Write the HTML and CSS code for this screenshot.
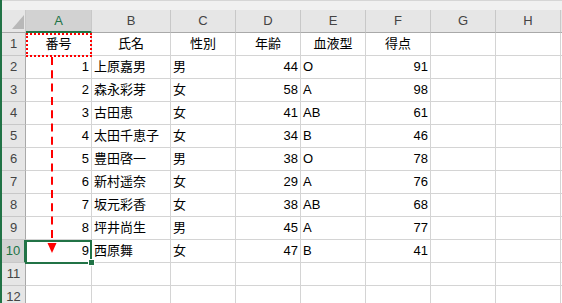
FILE: index.html
```html
<!DOCTYPE html>
<html lang="ja">
<head>
	<meta charset="utf-8">
	<title>Sheet1 - Excel</title>
	<link rel="stylesheet" href="styles.css">
</head>
<body>
	<div class="topbar"></div>
	<div class="sheet">
		<!-- column headers -->
		<div class="corner"></div>
		<div class="ch sel">A</div><div class="ch">B</div><div class="ch">C</div><div class="ch">D</div>
		<div class="ch">E</div><div class="ch">F</div><div class="ch">G</div><div class="ch">H</div><div class="ch"></div>

		<div class="rh">1</div>
		<div class="c copy">番号</div><div class="c">氏名</div><div class="c">性別</div><div class="c">年齢</div>
		<div class="c">血液型</div><div class="c">得点</div><div></div><div></div><div></div>

		<div class="rh">2</div>
		<div class="n">1</div><div>上原嘉男</div><div>男</div><div class="n">44</div><div>O</div><div class="n">91</div><div></div><div></div><div></div>
		<div class="rh">3</div>
		<div class="n">2</div><div>森永彩芽</div><div>女</div><div class="n">58</div><div>A</div><div class="n">98</div><div></div><div></div><div></div>
		<div class="rh">4</div>
		<div class="n">3</div><div>古田恵</div><div>女</div><div class="n">41</div><div>AB</div><div class="n">61</div><div></div><div></div><div></div>
		<div class="rh">5</div>
		<div class="n">4</div><div>太田千恵子</div><div>女</div><div class="n">34</div><div>B</div><div class="n">46</div><div></div><div></div><div></div>
		<div class="rh">6</div>
		<div class="n">5</div><div>豊田啓一</div><div>男</div><div class="n">38</div><div>O</div><div class="n">78</div><div></div><div></div><div></div>
		<div class="rh">7</div>
		<div class="n">6</div><div>新村遥奈</div><div>女</div><div class="n">29</div><div>A</div><div class="n">76</div><div></div><div></div><div></div>
		<div class="rh">8</div>
		<div class="n">7</div><div>坂元彩香</div><div>女</div><div class="n">38</div><div>AB</div><div class="n">68</div><div></div><div></div><div></div>
		<div class="rh">9</div>
		<div class="n">8</div><div>坪井尚生</div><div>男</div><div class="n">45</div><div>A</div><div class="n">77</div><div></div><div></div><div></div>
		<div class="rh sel">10</div>
		<div class="n cur">9</div><div>西原舞</div><div>女</div><div class="n">47</div><div>B</div><div class="n">41</div><div></div><div></div><div></div>
		<div class="rh">11</div>
		<div></div><div></div><div></div><div></div><div></div><div></div><div></div><div></div><div></div>
		<div class="rh">12</div>
		<div></div><div></div><div></div><div></div><div></div><div></div><div></div><div></div><div></div>

		<!-- fill arrow, drawn over the cells -->
		<svg class="arrow" width="100" height="260" viewBox="0 0 100 260">
			<line x1="50" y1="47" x2="50" y2="234" stroke="#ff0000" stroke-width="2" stroke-dasharray="8 5.3"/>
			<polygon points="45.5,233 54.5,233 50,243" fill="#ff0000"/>
		</svg>
	</div>
</body>
</html>
```

FILE: styles.css
```css
html, body {
	margin: 0;
	overflow: hidden;
}
body {
	background: #fff;
	color: #000;
	font-family: "Liberation Sans", "Noto Sans CJK JP", sans-serif;
	font-size: 13px;
	border-left: 2px solid #217346;
	height: 303px;
	box-sizing: border-box;
}
.topbar {
	height: 10px;
	background: #f1f1f1;
	border-top: 1px solid #d6d6d6;
	box-sizing: border-box;
}
.sheet {
	position: relative;
	display: grid;
	grid-template-columns: 24px 66px 79px repeat(7, 65px);
	grid-auto-rows: 23px;
}
.sheet > div {
	box-sizing: border-box;
	border-right: 1px solid #d4d4d4;
	border-bottom: 1px solid #d4d4d4;
	line-height: 22px;
	padding: 0 2px;
	white-space: nowrap;
}
.n { text-align: right; }
.c { text-align: center; }

/* headers */
.sheet > .ch, .sheet > .corner {
	background: #e6e6e6;
	border-right-color: #c8c8c8;
	border-bottom-color: #a9a9a9;
	text-align: center;
	color: #444;
}
.sheet > .rh {
	background: #e6e6e6;
	border-right-color: #a9a9a9;
	border-bottom-color: #c8c8c8;
	text-align: center;
	color: #444;
	padding: 0;
}
.sheet > .ch.sel {
	background: #d2d2d2;
	color: #217346;
	border-bottom: 2px solid #217346;
}
.sheet > .rh.sel {
	background: #d2d2d2;
	color: #217346;
	border-right: 2px solid #217346;
}
.corner { position: relative; }
.corner::after {
	content: "";
	position: absolute;
	right: 1px;
	bottom: 3px;
	width: 0;
	height: 0;
	border-left: 12px solid transparent;
	border-bottom: 14px solid #b8b8b8;
}

/* copy marquee and active cell */
.copy, .cur { position: relative; }
.copy::after {
	content: "";
	position: absolute;
	left: 0;
	top: 0;
	width: 66px;
	height: 24px;
	box-sizing: border-box;
	border: 2px dotted #ff0000;
}
.cur::after {
	content: "";
	position: absolute;
	left: -1px;
	top: 0;
	width: 67px;
	height: 24px;
	box-sizing: border-box;
	border: 2px solid #217346;
}
.cur::before {
	content: "";
	position: absolute;
	z-index: 1;
	left: 62px;
	top: 19px;
	width: 7px;
	height: 7px;
	box-sizing: border-box;
	background: #217346;
	border: 1px solid #fff;
}
.arrow {
	position: absolute;
	left: 0;
	top: 0;
	pointer-events: none;
}
```
